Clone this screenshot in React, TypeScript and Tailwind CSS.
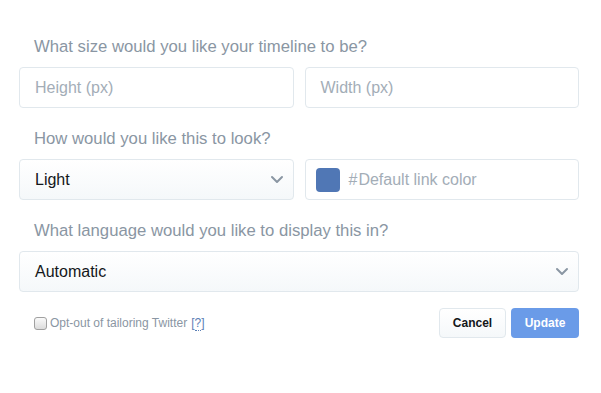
import React from "react";

function Chevron() {
  return (
    <svg width="14" height="9" viewBox="0 0 14 9" fill="none" className="shrink-0">
      <path d="M2 2l5 5 5-5" stroke="#8a96a3" strokeWidth="2" strokeLinecap="round" strokeLinejoin="round" />
    </svg>
  );
}

export default function App() {
  return (
    <div
      className="w-[601px] h-[393px] bg-white pl-[19px] pr-[22px] pt-[37px]"
      style={{ fontFamily: '"Liberation Sans", Arial, sans-serif' }}
    >
      <div className="pl-[15px] text-[16.7px] leading-[20px] text-[#8a96a3]">What size would you like your timeline to be?</div>
      <div className="mt-[10px] grid grid-cols-2 gap-[11px]">
        <div className="h-[41px] border border-[#e1e8ed] rounded-[4px] bg-white flex items-center px-[15px] text-[16px] text-[#a3adb7]">
          Height (px)
        </div>
        <div className="h-[41px] border border-[#e1e8ed] rounded-[4px] bg-white flex items-center px-[15px] text-[16px] text-[#a3adb7]">
          Width (px)
        </div>
      </div>

      <div className="mt-[21px] pl-[15px] text-[16.7px] leading-[20px] text-[#8a96a3]">How would you like this to look?</div>
      <div className="mt-[10px] grid grid-cols-2 gap-[11px]">
        <div className="h-[41px] border border-[#e1e8ed] rounded-[4px] bg-gradient-to-b from-white to-[#f5f8fa] flex items-center justify-between pl-[15px] pr-[9px] text-[16px] text-[#14171a]">
          <span>Light</span>
          <Chevron />
        </div>
        <div className="h-[41px] border border-[#e1e8ed] rounded-[4px] bg-white flex items-center pl-[10px] text-[16px] text-[#a3adb7]">
          <div className="w-[24px] h-[24px] rounded-[4px] bg-[#5077b5]" />
          <span className="ml-[9px]">#<span className="ml-[1px]">Default link color</span></span>
        </div>
      </div>

      <div className="mt-[21px] pl-[15px] text-[16.7px] leading-[20px] text-[#8a96a3]">What language would you like to display this in?</div>
      <div className="mt-[10px] h-[41px] border border-[#e1e8ed] rounded-[4px] bg-gradient-to-b from-white to-[#f5f8fa] flex items-center justify-between pl-[15px] pr-[9px] text-[16px] text-[#14171a]">
        <span>Automatic</span>
        <Chevron />
      </div>

      <div className="mt-[16px] flex items-center justify-between">
        <div className="flex items-center pl-[15px] text-[12px] text-[#8a96a3]">
          <span className="w-[13px] h-[13px] rounded-[3px] border border-[#a0a0a0] bg-gradient-to-b from-[#fafafa] to-[#dcdcdc] inline-block" />
          <span className="ml-[3px]">Opt-out of tailoring Twitter</span>
          <span className="ml-[4px] text-[#5b7fb5]">
            [<span className="border-b border-dotted border-[#5b7fb5]">?</span>]
          </span>
        </div>
        <div className="flex gap-[5px]">
          <div className="w-[67px] h-[30px] rounded-[4px] border border-[#e1e8ed] bg-gradient-to-b from-white to-[#f5f8fa] flex items-center justify-center text-[12px] font-bold text-[#14171a]">
            Cancel
          </div>
          <div className="w-[68px] h-[30px] rounded-[4px] bg-[#6a9be8] flex items-center justify-center text-[12px] font-bold text-white">
            Update
          </div>
        </div>
      </div>
    </div>
  );
}
